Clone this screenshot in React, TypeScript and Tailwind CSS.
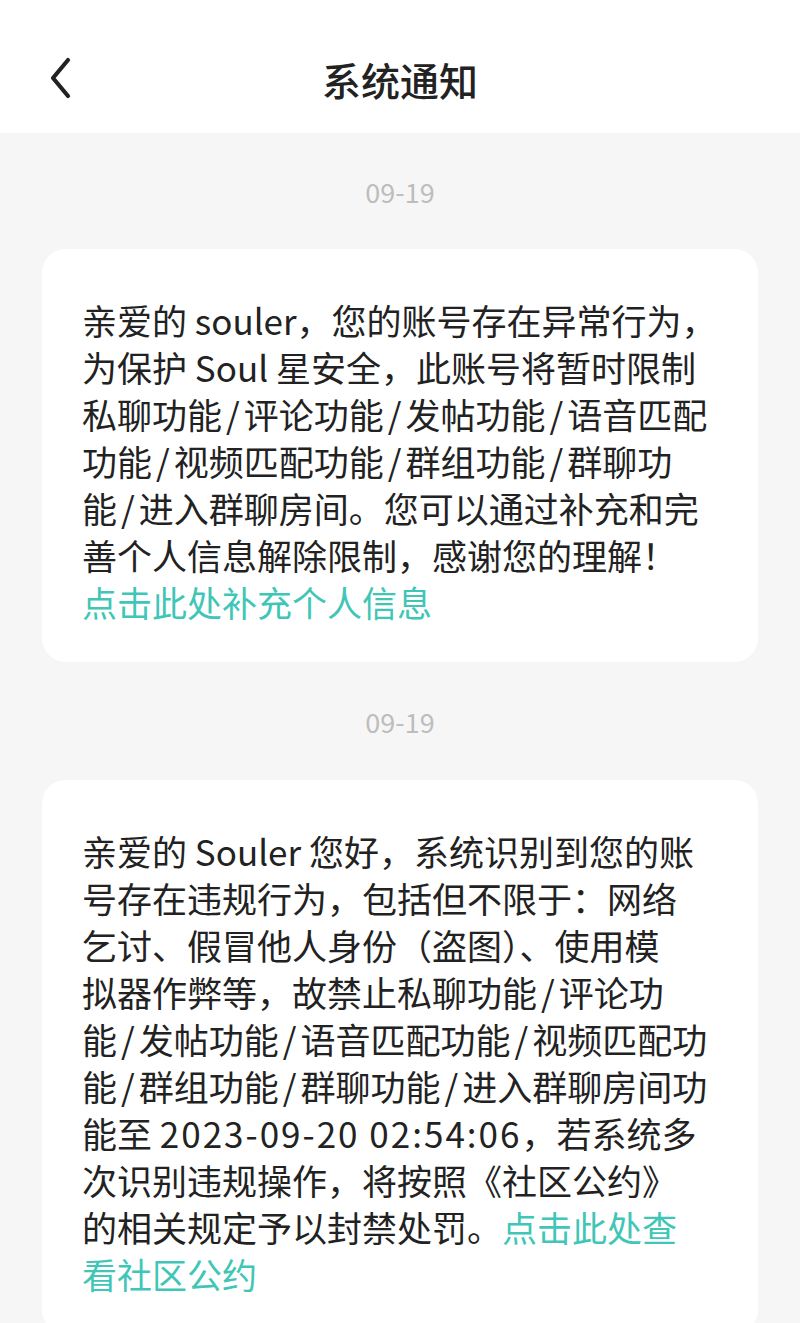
import React from "react";

const font = { fontFamily: '"Noto Sans CJK SC", "Noto Sans", sans-serif' };

function Line({ children }: { children: React.ReactNode }) {
  return <div className="whitespace-nowrap">{children}</div>;
}

function Link({ children }: { children: React.ReactNode }) {
  return <span className="text-[#3fc6b7]">{children}</span>;
}

function S() {
  return <span className="mx-[4px]">/</span>;
}

function DateRow({ h }: { h: string }) {
  return (
    <div className={`flex items-center justify-center ${h}`}>
      <span className="text-[27px] leading-none text-[#bdbdbd]">09-19</span>
    </div>
  );
}

export default function App() {
  return (
    <div className="min-h-[1323px] w-[800px] bg-[#f6f6f6]" style={font}>
      <header className="relative flex h-[133px] items-center justify-center bg-white pt-[26px]">
        <button className="absolute left-[40px] top-[52px] flex h-[52px] w-[40px] items-center justify-center">
          <svg width="28" height="44" viewBox="0 0 28 44" fill="none">
            <path d="M22 4 L7 22 L22 40" stroke="#222" strokeWidth="4.2" strokeLinecap="round" strokeLinejoin="round" />
          </svg>
        </button>
        <h1 className="text-[39px] font-medium leading-none text-[#222]">系统通知</h1>
      </header>

      <DateRow h="h-[116px]" />

      <div className="mx-[42px] rounded-[24px] bg-white px-[40px] pt-[47px] pb-[37px] text-[35px] leading-[47px] text-[#222]">
        <Line>亲爱的 souler，您的账号存在异常行为，</Line>
        <Line>为保护 Soul 星安全，此账号将暂时限制</Line>
        <Line>
          私聊功能<S />评论功能<S />发帖功能<S />语音匹配
        </Line>
        <Line>
          功能<S />视频匹配功能<S />群组功能<S />群聊功
        </Line>
        <Line>
          能<S />进入群聊房间。您可以通过补充和完
        </Line>
        <Line>善个人信息解除限制，感谢您的理解！</Line>
        <Line>
          <Link>点击此处补充个人信息</Link>
        </Line>
      </div>

      <DateRow h="h-[118px]" />

      <div className="mx-[42px] rounded-[24px] bg-white px-[40px] pt-[47px] pb-[37px] text-[35px] leading-[47px] text-[#222]">
        <Line>亲爱的 Souler 您好，系统识别到您的账</Line>
        <Line>号存在违规行为，包括但不限于：网络</Line>
        <Line>乞讨、假冒他人身份（盗图）、使用模</Line>
        <Line>
          拟器作弊等，故禁止私聊功能<S />评论功
        </Line>
        <Line>
          能<S />发帖功能<S />语音匹配功能<S />视频匹配功
        </Line>
        <Line>
          能<S />群组功能<S />群聊功能<S />进入群聊房间功
        </Line>
        <Line>
          能至 <span className="tracking-[2px]">2023-09-20 02:54:06</span>，若系统多
        </Line>
        <Line>次识别违规操作，将按照《社区公约》</Line>
        <Line>
          的相关规定予以封禁处罚。<Link>点击此处查</Link>
        </Line>
        <Line>
          <Link>看社区公约</Link>
        </Line>
      </div>
    </div>
  );
}
